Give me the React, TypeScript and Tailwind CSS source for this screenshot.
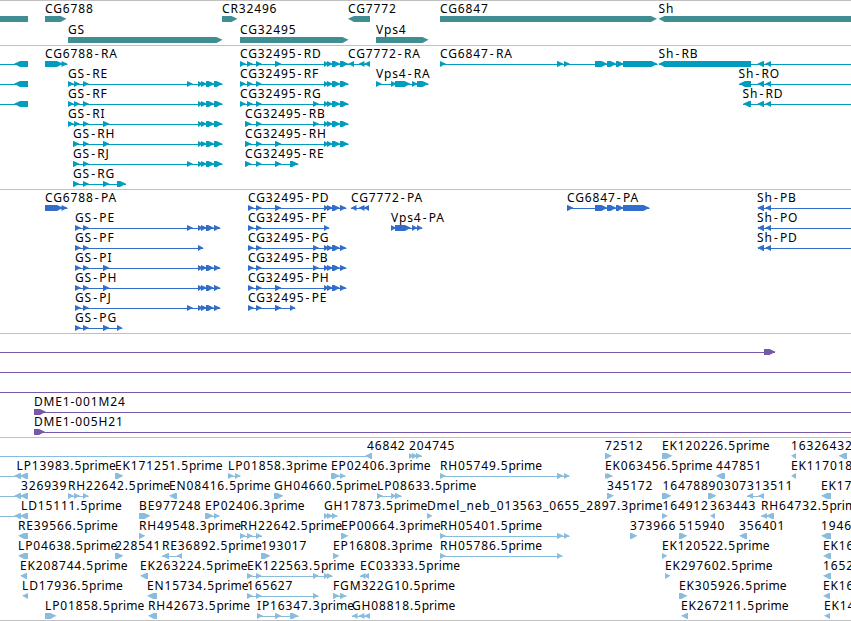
type Span = [number, number];

type Feature = {
  row: number;
  name?: string;
  // label position, when it is not at the first block
  at?: number;
  rev?: boolean;
  // thin connecting line, defaults to the extent of the blocks
  line?: Span;
  blocks: Span[];
};

type TrackProps = {
  className: string;
  pitch?: number;
  features: Feature[];
};

const WIDTH = 851;
const HEAD = 6;

const f = (row: number, name: string, ...blocks: Span[]): Feature => ({ row, name, blocks });
const r = (row: number, name: string, ...blocks: Span[]): Feature => ({ row, name, blocks, rev: true });

const genes: Feature[] = [
  r(0, "", [-20, 28]),
  f(0, "CG6788", [45, 66.5]),
  f(0, "CR32496", [222, 237.5]),
  r(0, "CG7772", [348, 370]),
  f(0, "CG6847", [440, 657]),
  { ...r(0, "Sh", [658.5, 870]), at: 658.5 },
  f(1, "GS", [68, 222.5]),
  f(1, "CG32495", [240, 348.5]),
  f(1, "Vps4", [376, 428.5]),
];

const gsTail: Span[] = [[198, 203], [201, 207], [206, 214.5], [214, 222.5]];
const cgTail: Span[] = [[324, 329], [327, 333], [332, 340.5], [340, 348.5]];
const gs1: Span = [68, 74];
const gs2: Span = [74, 80];
const gs3: Span = [83, 89];
const gs4: Span = [103, 109.5];
const gs5: Span = [187, 193];
const cg1: Span = [240, 246];
const cg2: Span = [247, 253];
const cg3: Span = [256, 262];
const cg4: Span = [275, 281.5];
const cg5: Span = [313, 319];
const sh: Span[] = [[757.3, 764], [765, 771]];

const transcripts: Feature[] = [
  ...[0, 1, 2].map((row) => ({ row, rev: true, line: [0, 28] as Span, blocks: [[14, 28]] as Span[] })),
  f(0, "CG6788-RA", [45, 63], [61.5, 67.5]),
  f(1, "GS-RE", gs1, gs2, gs3, gs5, ...gsTail),
  f(2, "GS-RF", gs1, gs2, gs3, ...gsTail),
  f(3, "GS-RI", gs1, gs2, gs3, gs4, ...gsTail),
  f(4, "GS-RH", [73, 79.5], gs3, gs4, ...gsTail),
  f(5, "GS-RJ", [73, 79.5], gs3, gs5, ...gsTail),
  f(6, "GS-RG", [73, 79.5], gs3, gs4, [117, 126]),
  f(0, "CG32495-RD", cg1, cg2, cg3, cg4, ...cgTail),
  f(1, "CG32495-RF", cg1, cg2, cg3, ...cgTail),
  f(2, "CG32495-RG", cg1, cg2, cg3, cg5, ...cgTail),
  f(3, "CG32495-RB", [245, 251.5], cg3, cg5, ...cgTail),
  f(4, "CG32495-RH", [245, 251.5], cg3, cg4, ...cgTail),
  f(5, "CG32495-RE", [245, 251.5], cg3, cg4, [290, 298.3]),
  r(0, "CG7772-RA", [348, 354], [358.5, 364.5], [364, 370]),
  f(1, "Vps4-RA", [376, 382], [391, 397], [395, 410.5], [412, 418], [417, 428.5]),
  f(0, "CG6847-RA", [440, 446], [557, 563.5], [564, 570], [595, 607.5], [607, 616.5], [616, 624], [623, 657.5]),
  { ...r(0, "Sh-RB", [658.5, 751], ...sh), line: [659, 851], at: 658.5 },
  { ...r(1, "Sh-RO", [739, 751], ...sh), line: [739, 851], at: 738.5 },
  { ...r(2, "Sh-RD", [743, 751], ...sh), line: [743, 851], at: 742.5 },
];

const gsCds: Span[] = [[198, 203], [201, 207], [206, 214], [214, 220.3]];
const cgCds: Span[] = [[324, 329], [327, 333], [332, 340], [340, 346.3]];
const p1: Span = [75, 81];
const q1: Span = [248, 254];

const proteins: Feature[] = [
  f(0, "CG6788-PA", [45, 63], [61.5, 67.5]),
  f(1, "GS-PE", p1, gs3, gs5, ...gsCds),
  f(2, "GS-PF", p1, gs3, [198, 203.3]),
  f(3, "GS-PI", p1, gs3, gs4, ...gsCds),
  f(4, "GS-PH", p1, gs3, gs4, ...gsCds),
  f(5, "GS-PJ", p1, gs3, gs5, ...gsCds),
  f(6, "GS-PG", p1, gs3, gs4, [117, 122.3]),
  f(0, "CG32495-PD", q1, cg3, cg4, ...cgCds),
  f(1, "CG32495-PF", q1, cg3, [324, 329.3]),
  f(2, "CG32495-PG", q1, cg3, cg5, ...cgCds),
  f(3, "CG32495-PB", q1, cg3, cg5, ...cgCds),
  f(4, "CG32495-PH", q1, cg3, cg4, ...cgCds),
  f(5, "CG32495-PE", q1, cg3, cg4, [290, 295.3]),
  r(0, "CG7772-PA", [351, 356.5], [358.5, 364.5], [363.5, 369]),
  f(1, "Vps4-PA", [391, 396], [395, 411], [412, 417.5], [417, 422.3]),
  f(0, "CG6847-PA", [567, 573.5], [595, 607.5], [607, 616.5], [616, 624], [623, 649.5]),
  { ...r(0, "Sh-PB", ...sh), line: [758, 851] },
  { ...r(1, "Sh-PO", ...sh), line: [758, 851] },
  { ...r(2, "Sh-PD", ...sh), line: [758, 851] },
];

const clones: Feature[] = [
  { row: 0, line: [0, 775], blocks: [[764, 775.5]] },
  { row: 1, line: [0, 851], blocks: [] },
  { row: 2, line: [0, 851], blocks: [] },
  { row: 3, name: "DME1-001M24", line: [34, 851], blocks: [[34, 46]] },
  { row: 4, name: "DME1-005H21", line: [34, 851], blocks: [[34, 45]] },
];

const edge: Span[] = [[14, 21], [20, 28]];

const ests: Feature[] = [
  { ...r(0, "46842", [365, 372]), line: [0, 372], at: 367 },
  f(0, "204745", [409, 414], [412, 418], [416, 422]),
  f(0, "72512", [605, 612]),
  f(0, "EK120226.5prime", [662, 672.5]),
  r(0, "16326432", [791, 796]),
  r(0, "", [838.5, 847]),

  { ...r(1, "LP13983.5prime", ...edge), line: [0, 28], at: 16.5 },
  f(1, "EK171251.5prime", [115, 123.5]),
  f(1, "LP01858.3prime", [228, 234], [235, 240.5]),
  f(1, "EP02406.3prime", [331, 340], [340, 345.5]),
  f(1, "RH05749.5prime", [440, 446], [557, 563.5], [564, 569.5]),
  f(1, "EK063456.5prime", [605, 610], [607, 612.5]),
  r(1, "447851", [716, 725]),
  r(1, "EK117018", [791, 796]),

  { ...r(2, "326939", ...edge), line: [0, 28], at: 21 },
  f(2, "RH22642.5prime", gs1, gs2, [83, 88.5]),
  r(2, "EN08416.5prime", [169, 177]),
  f(2, "GH04660.5prime", [274, 283.5]),
  f(2, "LP08633.5prime", [377, 383], [391, 396.5], [395, 401.5]),
  f(2, "345172", [607, 614]),
  { ...f(2, "164788", [662, 671.5]), at: 662.5 },
  { ...f(2, "90307", [708, 716.5]), at: 708.5 },
  r(2, "313511", [747, 753], [758, 764]),
  r(2, "EK17", [821, 831]),

  { ...r(3, "LD15111.5prime", ...edge), line: [0, 28], at: 21 },
  f(3, "BE977248", [139, 150.5]),
  f(3, "EP02406.3prime", [205, 213.5], [214, 219.5]),
  f(3, "GH17873.5prime", [324, 329], [327, 333], [332, 337.5]),
  f(3, "Dmel_neb_013563_0655_2897.3prime", [427, 432.5]),
  { ...f(3, "164912", [662, 668]), at: 662.5 },
  r(3, "363443", [710, 715]),
  r(3, "RH64732.5prime", [761, 767], [766, 774]),

  r(4, "RE39566.5prime", [18, 28]),
  f(4, "RH49548.3prime", [139, 145.5]),
  f(4, "RH22642.5prime", cg1, cg2, cg3),
  f(4, "EP00664.3prime", [341, 348.5]),
  f(4, "RH05401.5prime", [440, 446], [557, 563.5], [564, 569.5]),
  f(4, "373966", [630, 637.5]),
  f(4, "515940", [679, 687.5]),
  r(4, "356401", [739, 747]),
  r(4, "1946", [821, 831]),

  r(5, "LP04638.5prime", [18, 28]),
  f(5, "228541", [115, 123.5]),
  r(5, "RE36892.5prime", [162, 169], [176.5, 182]),
  f(5, "193017", [261, 270.5]),
  f(5, "EP16808.3prime", [333, 339.5]),
  f(5, "RH05786.5prime", [440, 446], [557, 562.5]),
  f(5, "EK120522.5prime", [662, 667.5]),
  r(5, "EK16", [823, 831]),

  r(6, "EK208744.5prime", [20, 27]),
  r(6, "EK263224.5prime", [140, 148]),
  f(6, "EK122563.5prime", cg2, cg3, cg5, [324, 329], [327, 332.5]),
  r(6, "EC03333.5prime", [360, 365.5], [363.5, 369]),
  f(6, "EK297602.5prime", [665, 670.5]),
  r(6, "1652", [823, 831]),

  r(7, "LD17936.5prime", [22, 28]),
  r(7, "EN15734.5prime", [147, 157]),
  f(7, "165627", cg2, cg3, [313, 318.5]),
  f(7, "FGM322G10.5prime", [333, 339.5], [340, 346.5]),
  f(7, "EK305926.5prime", [679, 687.5]),
  r(7, "EK16", [823, 830]),

  f(8, "LP01858.5prime", [45, 56.5]),
  r(8, "RH42673.5prime", [148, 157]),
  f(8, "IP16347.3prime", [257, 263], cg4, [290, 298.5]),
  r(8, "GH08818.5prime", [352, 357.5], [358.5, 364.5], [364, 370]),
  r(8, "EK267211.5prime", [681, 688]),
  r(8, "EK14", [824, 830]),
];

const blockPoints = ([a, b]: Span, rev?: boolean) => {
  const head = Math.min(HEAD, b - a);
  return rev
    ? `${b},15 ${a + head},15 ${a},17.8 ${a + head},21 ${b},21`
    : `${a},15 ${b - head},15 ${b},17.8 ${b - head},21 ${a},21`;
};

const Label = ({ name, x }: { name: string; x: number }) => {
  const [head, tail] = name.split("prime");
  // isoform suffixes (-RA, -PB ...) get a little air around the dash
  const suffix = head.match(/-[RP][A-Z]$/)?.[0];
  return (
    <text x={x} y={12} className="fill-black tracking-[0.85px]">
      {suffix ? head.slice(0, -3) : head}
      {suffix && (
        <>
          <tspan dx={1.2} className="tracking-[2.2px]">-</tspan>
          {suffix.slice(1)}
        </>
      )}
      {tail !== undefined && <tspan className="tracking-[0.05px]">prime</tspan>}
    </text>
  );
};

const Track = ({ className, pitch = 20, features }: TrackProps) => (
  <section className={`shrink-0 overflow-hidden border-t border-[#c0c0c0] ${className}`}>
    <svg width={WIDTH} height="100%" className="block">
      {features.map(({ row, name, at, rev, line, blocks }, i) => {
        const [from, to] = line ?? [blocks[0][0], blocks[blocks.length - 1][1]];
        return (
          <g key={i} transform={`translate(0 ${row * pitch})`}>
            {(line || blocks.length > 1) && (
              <rect x={from} y={18} width={to - from} height={1} fill="currentColor" />
            )}
            {blocks.map((block, j) => (
              <polygon key={j} points={blockPoints(block, rev)} fill="currentColor" />
            ))}
            {name && <Label name={name} x={at ?? Math.round(blocks[0]?.[0] ?? from)} />}
          </g>
        );
      })}
    </svg>
  </section>
);

export default function App() {
  return (
    <main className="flex h-[621px] w-[851px] flex-col overflow-hidden border-b border-[#c0c0c0] bg-white font-['Noto_Sans',sans-serif] text-[12px]">
      <Track className="h-[45px] text-[#3f8e93]" pitch={21} features={genes} />
      <Track className="h-[144px] text-[#009dbf]" features={transcripts} />
      <Track className="h-[144px] text-[#316dcb]" features={proteins} />
      <Track className="h-[104px] text-[#7759a8]" features={clones} />
      <Track className="h-[183px] text-[#8abddd]" features={ests} />
    </main>
  );
}
